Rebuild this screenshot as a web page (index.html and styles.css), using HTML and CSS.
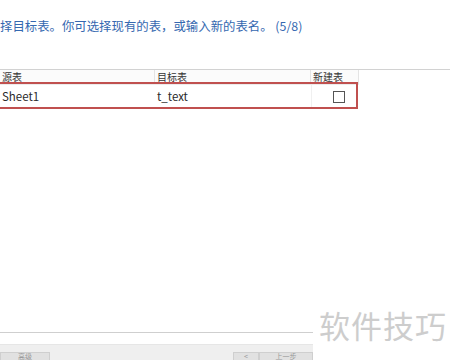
FILE: index.html
```html
<!DOCTYPE html>
<html lang="zh-CN">
<head>
    <meta charset="UTF-8">
    <title>导入向导 - 选择目标表</title>
    <link rel="stylesheet" href="styles.css">
</head>
<body>
    <div class="wizard">
        <p class="prompt">择目标表。你可选择现有的表，或输入新的表名。 (5/8)</p>

        <div class="grid">
            <div class="grid-row grid-head">
                <div class="cell col-src">源表</div>
                <div class="cell col-dst">目标表</div>
                <div class="cell col-new">新建表</div>
            </div>
            <div class="grid-row grid-data">
                <div class="cell col-src">Sheet1</div>
                <div class="cell col-dst">t_text</div>
                <div class="cell col-new"><span class="checkbox"></span></div>
            </div>
            <div class="highlight"></div>
        </div>

        <div class="footer">
            <div class="footer-bar">
                <div class="btn btn-left">高级</div>
                <div class="btn-group">
                    <div class="btn btn-back">&lt;</div>
                    <div class="btn btn-prev">上一步</div>
                </div>
            </div>
        </div>

        <div class="watermark">软件技巧</div>
    </div>
</body>
</html>
```

FILE: styles.css
```css
body {
    margin: 0;
    padding: 0;
    background: #fff;
    font-family: "Noto Sans CJK SC", "Noto Sans", sans-serif;
    overflow: hidden;
}

.wizard {
    position: relative;
    width: 450px;
    height: 360px;
    display: flex;
    flex-direction: column;
    overflow: hidden;
}

.prompt {
    margin: 0;
    padding: 17px 0 0 0;
    height: 52px;
    font-size: 12.4px;
    line-height: 18px;
    color: #3568b0;
    white-space: nowrap;
}

.grid {
    position: relative;
    border-top: 1px solid #d2d2d2;
    flex: 1;
}

.grid-row {
    display: flex;
    width: 359px;
}

.grid-head {
    height: 14px;
    background: #fbfbfb;
    border-bottom: 1px solid #ececec;
}

.grid-head .cell {
    font-size: 10px;
    line-height: 14px;
    color: #333;
    border-right: 1px solid #e4e4e4;
}

.grid-data {
    height: 23px;
    background: #fff;
}

.grid-data .cell {
    font-size: 11.5px;
    line-height: 23px;
    color: #2a2a2a;
}

.cell {
    box-sizing: border-box;
    padding-left: 2px;
    overflow: hidden;
    white-space: nowrap;
}

.col-src {
    width: 155px;
}

.col-dst {
    width: 156px;
}

.col-new {
    width: 48px;
}

.grid-data .col-new {
    border-left: 1px solid #f0f0f0;
    display: flex;
    justify-content: center;
    align-items: center;
}

.checkbox {
    width: 10px;
    height: 10px;
    border: 1px solid #555;
    background: #fff;
    margin-left: 4px;
}

/* red annotation box */
.highlight {
    position: absolute;
    left: -2px;
    top: 12px;
    width: 356px;
    height: 23px;
    border: 2px solid #c0504f;
}

.footer {
    height: 27px;
    border-top: 1px solid #cfcfcf;
    display: flex;
    flex-direction: column;
    justify-content: flex-end;
}

.footer-bar {
    height: 15px;
    width: 313px;
    background: #efefef;
    border-top: 1px solid #e6e6e6;
    display: flex;
    justify-content: space-between;
    align-items: flex-end;
}

.btn {
    height: 8px;
    box-sizing: border-box;
    background: #e1e1e1;
    border: 1px solid #cfcfcf;
    border-bottom: none;
    font-size: 7px;
    line-height: 7px;
    color: #999;
    overflow: hidden;
    text-align: center;
}

.btn-left {
    width: 50px;
}

.btn-group {
    display: flex;
}

.btn-back {
    width: 26px;
}

.btn-prev {
    width: 54px;
}

.watermark {
    position: absolute;
    right: 0;
    bottom: 0;
    width: 137px;
    height: 60px;
    background: #fff;
    font-size: 31px;
    line-height: 50px;
    color: #cdcdcd;
    letter-spacing: 1px;
    padding-left: 6px;
    box-sizing: border-box;
}
```
